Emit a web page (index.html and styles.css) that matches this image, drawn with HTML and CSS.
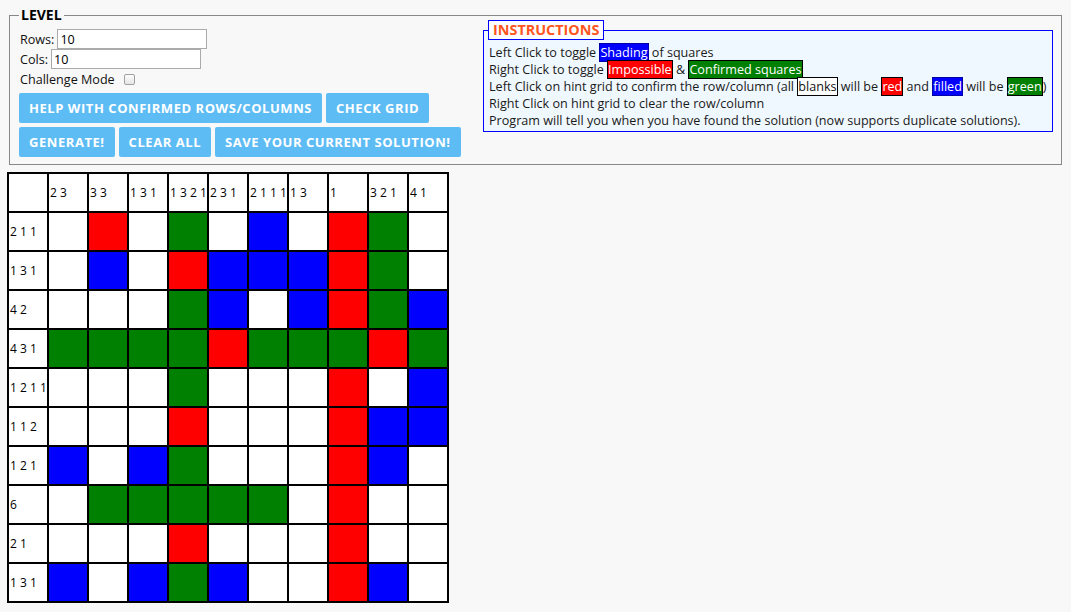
FILE: index.html
```html
<!DOCTYPE html>
<html>
<head>
<meta charset="utf-8">
<title>Nonogram</title>
<link rel="stylesheet" href="styles.css">
</head>
<body>
<fieldset class="level">
  <legend class="level-legend">LEVEL</legend>
  <div class="top">
    <div class="controls">
      <div class="field"><span>Rows:</span><input class="num" type="text" value="10"></div>
      <div class="field"><span>Cols:</span><input class="num" type="text" value="10"></div>
      <div class="field"><span>Challenge Mode</span><input class="check" type="checkbox"></div>
      <div class="btn-row">
        <button class="btn">HELP WITH CONFIRMED ROWS/COLUMNS</button>
        <button class="btn">CHECK GRID</button>
      </div>
      <div class="btn-row">
        <button class="btn">GENERATE!</button>
        <button class="btn">CLEAR ALL</button>
        <button class="btn">SAVE YOUR CURRENT SOLUTION!</button>
      </div>
    </div>
    <fieldset class="instructions">
      <legend class="ins-legend">INSTRUCTIONS</legend>
      <div class="line">Left Click to toggle <span class="tag tag-blue">Shading</span> of squares</div>
      <div class="line">Right Click to toggle <span class="tag tag-red">Impossible</span> &amp; <span class="tag tag-green">Confirmed squares</span></div>
      <div class="line">Left Click on hint grid to confirm the row/column (all <span class="tag tag-white">blanks</span> will be <span class="tag tag-red">red</span> and <span class="tag tag-blue">filled</span> will be <span class="tag tag-green">green</span>)</div>
      <div class="line">Right Click on hint grid to clear the row/column</div>
      <div class="line">Program will tell you when you have found the solution (now supports duplicate solutions).</div>
    </fieldset>
  </div>
</fieldset>

<table class="board">
  <tr>
    <td class="hint"></td>
    <td class="hint">2 3</td><td class="hint">3 3</td><td class="hint">1 3 1</td><td class="hint">1 3 2 1</td><td class="hint">2 3 1</td>
    <td class="hint">2 1 1 1</td><td class="hint">1 3</td><td class="hint">1</td><td class="hint">3 2 1</td><td class="hint">4 1</td>
  </tr>
  <tr><td class="hint">2 1 1</td><td></td><td class="r"></td><td></td><td class="g"></td><td></td><td class="b"></td><td></td><td class="r"></td><td class="g"></td><td></td></tr>
  <tr><td class="hint">1 3 1</td><td></td><td class="b"></td><td></td><td class="r"></td><td class="b"></td><td class="b"></td><td class="b"></td><td class="r"></td><td class="g"></td><td></td></tr>
  <tr><td class="hint">4 2</td><td></td><td></td><td></td><td class="g"></td><td class="b"></td><td></td><td class="b"></td><td class="r"></td><td class="g"></td><td class="b"></td></tr>
  <tr><td class="hint">4 3 1</td><td class="g"></td><td class="g"></td><td class="g"></td><td class="g"></td><td class="r"></td><td class="g"></td><td class="g"></td><td class="g"></td><td class="r"></td><td class="g"></td></tr>
  <tr><td class="hint">1 2 1 1</td><td></td><td></td><td></td><td class="g"></td><td></td><td></td><td></td><td class="r"></td><td></td><td class="b"></td></tr>
  <tr><td class="hint">1 1 2</td><td></td><td></td><td></td><td class="r"></td><td></td><td></td><td></td><td class="r"></td><td class="b"></td><td class="b"></td></tr>
  <tr><td class="hint">1 2 1</td><td class="b"></td><td></td><td class="b"></td><td class="g"></td><td></td><td></td><td></td><td class="r"></td><td class="b"></td><td></td></tr>
  <tr><td class="hint">6</td><td></td><td class="g"></td><td class="g"></td><td class="g"></td><td class="g"></td><td class="g"></td><td></td><td class="r"></td><td></td><td></td></tr>
  <tr><td class="hint">2 1</td><td></td><td></td><td></td><td class="r"></td><td></td><td></td><td></td><td class="r"></td><td></td><td></td></tr>
  <tr><td class="hint">1 3 1</td><td class="b"></td><td></td><td class="b"></td><td class="g"></td><td class="b"></td><td></td><td></td><td class="r"></td><td class="b"></td><td></td></tr>
</table>
</body>
</html>
```

FILE: styles.css
```css
html, body {
  background: #f8f8f8;
}
body {
  margin: 8px 7px;
  font-family: "Open Sans", "Liberation Sans", sans-serif;
  font-size: 12.6px;
  color: #111;
}

.level {
  margin: 0 2px;
  padding: 0 9px 7px 10px;
  border: 1px solid #888;
  min-width: 0;
}
.level-legend {
  padding: 0 2px;
  margin-left: -1px;
  font-weight: bold;
  font-size: 14px;
  line-height: 14px;
  color: #000;
}

.top {
  display: flex;
  justify-content: space-between;
  align-items: flex-start;
}

.controls {
  padding-top: 7px;
  display: flex;
  flex-direction: column;
}
.field {
  display: flex;
  align-items: center;
  height: 20px;
  white-space: nowrap;
}
.num {
  box-sizing: border-box;
  width: 150px;
  height: 20px;
  margin: 0 0 0 3px;
  padding: 0 2px;
  border: 1px solid #aaa;
  background: #fff;
  font-family: "Open Sans", "Liberation Sans", sans-serif;
  font-size: 12.6px;
  color: #000;
}
.check {
  -webkit-appearance: none;
  appearance: none;
  box-sizing: border-box;
  width: 11px;
  height: 11px;
  margin: 1px 0 0 9px;
  border: 1px solid #a0a0a0;
  border-radius: 2px;
  background: linear-gradient(#fcfcfc, #e6e6e6);
}

.btn-row {
  display: flex;
  gap: 4px;
  margin-left: -1px;
  margin-top: 4px;
}
.btn {
  height: 30px;
  padding: 0 10px;
  border: none;
  border-radius: 2px;
  background: #5ebcf5;
  color: #fff;
  font-family: "Open Sans", "Liberation Sans", sans-serif;
  font-weight: bold;
  font-size: 13px;
  letter-spacing: 0.55px;
  white-space: nowrap;
}

.instructions {
  box-sizing: border-box;
  width: 570px;
  min-width: 0;
  margin: -2px -1px 0 0;
  padding: 4px 5px 2px 5px;
  border: 1px solid #0000ff;
  background: #f0f8ff;
  color: #1a1a1a;
}
.ins-legend {
  padding: 0 4px;
  margin-left: -1px;
  border: 1px solid #0000ff;
  background: #fff;
  color: #ff5522;
  font-weight: bold;
  font-size: 14.4px;
  line-height: 18px;
}
.line {
  line-height: 17px;
  white-space: nowrap;
}
.tag {
  border: 1px solid #000;
  padding: 0;
}
.tag-blue { background: #0000ff; color: #fff; border-color: #0000aa; }
.tag-red { background: #ff0000; color: #fff; }
.tag-green { background: #008000; color: #fff; }
.tag-white { background: #fff; color: #111; }

.board {
  margin-top: 7px;
  border-collapse: collapse;
  background: #fff;
}
.board td {
  box-sizing: border-box;
  width: 40px;
  min-width: 40px;
  height: 39px;
  padding: 0 0 0 1px;
  border: 2px solid #000;
  font-family: "Open Sans", "Liberation Sans", sans-serif;
  font-size: 12px;
  white-space: nowrap;
  color: #000;
  vertical-align: middle;
}
.board td.r { background: #ff0000; }
.board td.g { background: #008000; }
.board td.b { background: #0000ff; }
```
